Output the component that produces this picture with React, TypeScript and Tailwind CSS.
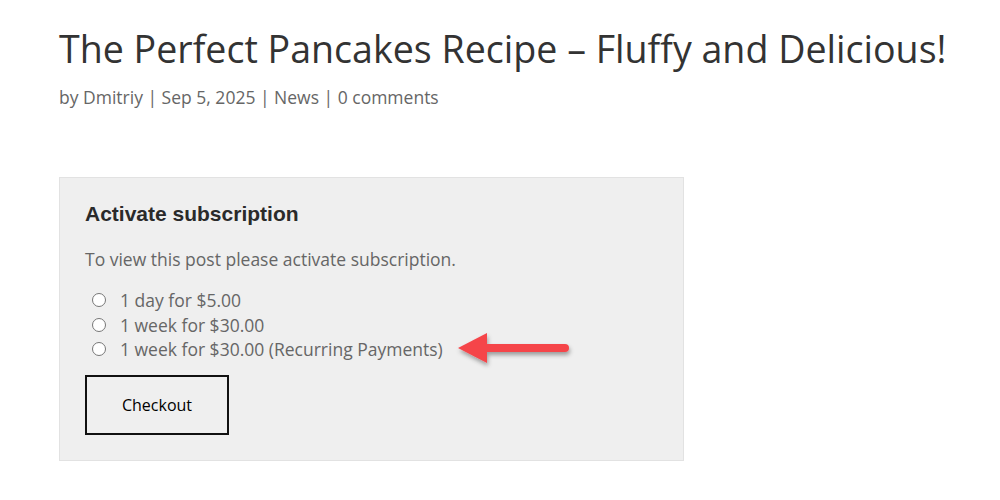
import React from "react";

const plans = [
  "1 day for $5.00",
  "1 week for $30.00",
  "1 week for $30.00 (Recurring Payments)",
];

function Arrow() {
  return (
    <svg width="124" height="40" viewBox="0 0 124 40" className="absolute left-[367px] top-[-6px]" aria-hidden>
      <defs>
        <filter id="sh" x="-20%" y="-40%" width="140%" height="200%">
          <feDropShadow dx="1" dy="3" stdDeviation="2" floodColor="#000" floodOpacity="0.35" />
        </filter>
      </defs>
      <g filter="url(#sh)">
        <line x1="30" y1="17" x2="113" y2="17" stroke="#f5454a" strokeWidth="8" strokeLinecap="round" />
        <polygon points="6,17 35,2 35,32" fill="#f5454a" />
      </g>
    </svg>
  );
}

export default function App() {
  return (
    <div className="min-h-[500px] bg-white px-[59px] pt-[25px] font-['Open_Sans',sans-serif]">
      <h1 className="whitespace-nowrap text-[37.6px] leading-[48px] text-[#333]">
        The Perfect Pancakes Recipe – Fluffy and Delicious!
      </h1>
      <p className="mt-[11px] text-[17.5px] leading-[26px] text-[#666]">
        by Dmitriy | Sep 5, 2025 | News | 0 comments
      </p>

      <div className="mt-[67px] w-[625px] border border-[#e2e2e2] bg-[#efefef] px-[25px] pt-[22px] pb-[25px]">
        <h3 className="font-['Liberation_Sans',Arial,sans-serif] text-[21px] font-bold leading-[28px] text-[#2a2a2a]">
          Activate subscription
        </h3>
        <p className="mt-[18px] text-[17.5px] leading-[26px] text-[#666]">
          To view this post please activate subscription.
        </p>
        <div className="mt-[16px] flex flex-col">
          {plans.map((p, i) => (
            <label key={p} className="relative flex h-[24.5px] items-center gap-[14px] pl-[7px] text-[17.5px] text-[#666]">
              <span className="h-[14px] w-[14px] rounded-full border border-[#777] bg-white" />
              <span>{p}</span>
              {i === 2 && <Arrow />}
            </label>
          ))}
        </div>
        <button className="mt-[13px] h-[60px] w-[144px] border-2 border-[#111] text-[16px] text-black">
          Checkout
        </button>
      </div>
    </div>
  );
}
